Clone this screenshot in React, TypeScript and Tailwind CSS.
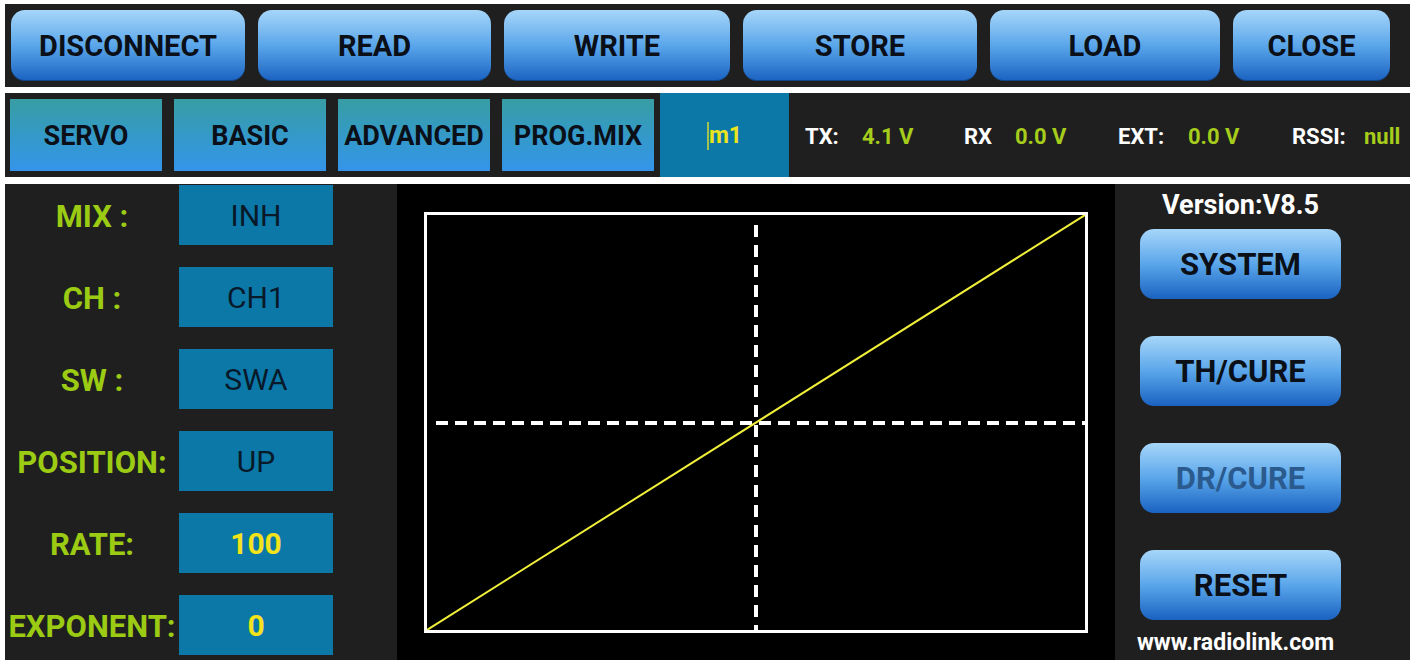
import React from "react";

const font = { fontFamily: "Roboto, 'Liberation Sans', Arial, sans-serif" };

function TopBtn({ label, w }: { label: string; w: string }) {
  return (
    <div
      className={`${w} h-[71px] shrink-0 rounded-[14px] bg-linear-to-b from-[#a6d6f9] via-[#5aa6ea] to-[#1a62c1] flex items-center justify-center pt-[2px] text-[29px] font-bold text-[#0a0f18] shadow-[inset_0_-1px_0_rgba(0,0,0,0.3)]`}
    >
      {label}
    </div>
  );
}

function Tab({ label }: { label: string }) {
  return (
    <div className="w-[152px] h-[72px] shrink-0 bg-linear-to-b from-[#389da3] to-[#3594ea] flex items-center justify-center pt-[2px] text-[27px] font-bold text-[#0a0f18] whitespace-nowrap">
      {label}
    </div>
  );
}

function SideBtn({ label, dim }: { label: string; dim?: boolean }) {
  return (
    <div
      className={`w-[201px] h-[70px] shrink-0 rounded-[14px] bg-linear-to-b from-[#a6d6f9] via-[#5aa6ea] to-[#1a62c1] flex items-center justify-center pt-[2px] text-[31px] font-bold ${dim ? "text-[#2b5b8e]" : "text-[#0a0f18]"}`}
    >
      {label}
    </div>
  );
}

function Row({ label, value, yellow }: { label: string; value: string; yellow?: boolean }) {
  return (
    <div className="flex h-[60px] items-center">
      <div className="w-[174px] text-center text-[31px] font-bold text-[#9ccb14] whitespace-nowrap pt-[4px]">{label}</div>
      <div
        className={`w-[154px] h-[60px] bg-[#0b78a8] flex items-center justify-center text-[30px] ${yellow ? "font-bold text-[#f2e31c]" : "text-[#08192a]"}`}
      >
        {value}
      </div>
    </div>
  );
}

export default function App() {
  return (
    <div className="w-[1415px] h-[666px] bg-white pt-[4px] pl-[5px] pr-[5px] flex flex-col" style={font}>
      {/* top bar */}
      <div className="h-[83px] bg-[#1f1f1f] flex items-center pl-[6px] gap-[13px]">
        <TopBtn label="DISCONNECT" w="w-[234px]" />
        <TopBtn label="READ" w="w-[233px]" />
        <TopBtn label="WRITE" w="w-[226px]" />
        <TopBtn label="STORE" w="w-[234px]" />
        <TopBtn label="LOAD" w="w-[230px]" />
        <TopBtn label="CLOSE" w="w-[157px]" />
      </div>
      {/* tab bar */}
      <div className="mt-[6px] h-[84px] bg-[#1f1f1f] flex items-center pl-[5px]">
        <div className="flex gap-[12px]">
          <Tab label="SERVO" />
          <Tab label="BASIC" />
          <Tab label="ADVANCED" />
          <Tab label="PROG.MIX" />
        </div>
        <div className="ml-[6px] w-[129px] h-full bg-[#0b78a8] flex items-center justify-center pt-[2px]">
          <span className="w-[2px] h-[28px] bg-[#c9d23a] opacity-80" />
          <span className="text-[23px] font-bold text-[#e9e41f]">m1</span>
        </div>
        <div className="flex items-center ml-[16px] text-[22px] font-bold whitespace-nowrap pt-[2px]">
          <span className="w-[57px] text-white">TX:</span>
          <span className="w-[102px] text-[#a6cc1c]">4.1 V</span>
          <span className="w-[51px] text-white">RX</span>
          <span className="w-[103px] text-[#a6cc1c]">0.0 V</span>
          <span className="w-[70px] text-white">EXT:</span>
          <span className="w-[104px] text-[#a6cc1c]">0.0 V</span>
          <span className="w-[72px] text-white">RSSI:</span>
          <span className="text-[#a6cc1c]">null</span>
        </div>
      </div>
      {/* main */}
      <div className="mt-[7px] h-[476px] flex">
        <div className="w-[392px] bg-[#1f1f1f] pt-[1px] flex flex-col gap-[22px]">
          <Row label="MIX :" value="INH" />
          <Row label="CH :" value="CH1" />
          <Row label="SW :" value="SWA" />
          <Row label="POSITION:" value="UP" />
          <Row label="RATE:" value="100" yellow />
          <Row label="EXPONENT:" value="0" yellow />
        </div>
        <div className="w-[718px] bg-black pl-[27px] pt-[28px]">
          <div className="w-[664px] h-[421px] border-[3px] border-white">
            <svg width="658" height="415" viewBox="0 0 658 415" className="block">
              <line x1="329" y1="10" x2="329" y2="415" stroke="#fff" strokeWidth="4" strokeDasharray="12 8" />
              <line x1="9" y1="208" x2="658" y2="208" stroke="#fff" strokeWidth="4" strokeDasharray="12 7" />
              <line x1="0" y1="415" x2="658" y2="0" stroke="#f0f03a" strokeWidth="2" />
            </svg>
          </div>
        </div>
        <div className="flex-1 bg-[#1f1f1f] pl-[25px] pt-[4px]">
          <div className="w-[201px] flex flex-col items-center">
            <div className="text-[27px] font-bold text-white whitespace-nowrap leading-[34px]">Version:V8.5</div>
            <div className="mt-[7px] flex flex-col gap-[37px]">
              <SideBtn label="SYSTEM" />
              <SideBtn label="TH/CURE" />
              <SideBtn label="DR/CURE" dim />
              <SideBtn label="RESET" />
            </div>
            <div className="mt-[7px] text-[23px] font-bold text-white whitespace-nowrap leading-[32px] -translate-x-[5px]">www.radiolink.com</div>
          </div>
        </div>
      </div>
    </div>
  );
}
